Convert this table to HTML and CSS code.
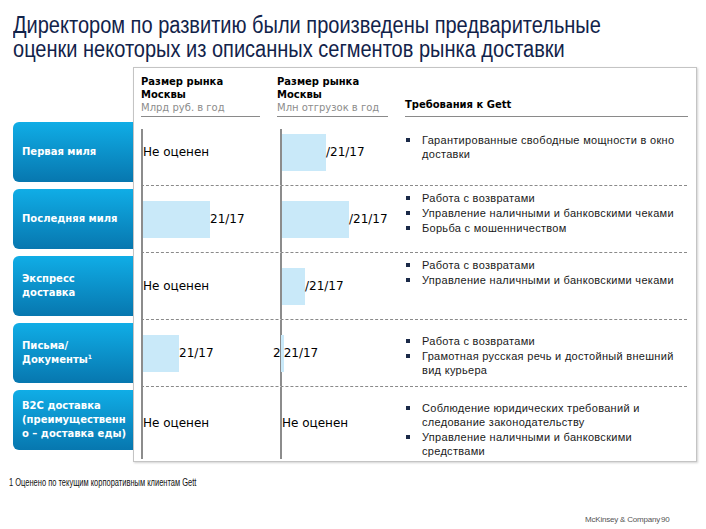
FILE: index.html
```html
<!DOCTYPE html>
<html lang="ru">
<head>
<meta charset="utf-8">
<title>Оценки сегментов рынка доставки</title>
<link rel="stylesheet" href="styles.css">
</head>
<body>
<div class="slide">
  <h1 class="title"><span class="narrow">Директором по развитию были произведены предварительные<br>оценки некоторых из описанных сегментов рынка доставки</span></h1>
  <div class="main">
    <div class="labels">
      <div class="label"><span>Первая миля</span></div>
      <div class="label"><span>Последняя миля</span></div>
      <div class="label"><span>Экспресс<br>доставка</span></div>
      <div class="label"><span>Письма/<br>Документы<sup>1</sup></span></div>
      <div class="label"><span>B2C доставка<br>(преимущественн<br>о – доставка еды)</span></div>
    </div>
    <div class="board">
      <div class="head">
        <div class="hcell"><b>Размер рынка<br>Москвы</b><span class="unit">Млрд руб. в год</span></div>
        <div class="hcell"><b>Размер рынка<br>Москвы</b><span class="unit">Млн отгрузок в год</span></div>
        <div class="hcell hcell-req"><b>Требования к Gett</b></div>
      </div>
      <div class="rows">
        <div class="row row-first">
          <div class="cell">Не оценен</div>
          <div class="cell"><span class="bar" style="width:44px"></span>/21/17</div>
          <ul class="reqs">
            <li>Гарантированные свободные мощности в окно<br>доставки</li>
          </ul>
        </div>
        <div class="row">
          <div class="cell"><span class="bar" style="width:67px"></span>21/17</div>
          <div class="cell"><span class="bar" style="width:67px"></span>/21/17</div>
          <ul class="reqs reqs-tight">
            <li>Работа с возвратами</li>
            <li>Управление наличными и банковскими чеками</li>
            <li>Борьба с мошенничеством</li>
          </ul>
        </div>
        <div class="row">
          <div class="cell">Не оценен</div>
          <div class="cell"><span class="bar" style="width:23px"></span>/21/17</div>
          <ul class="reqs reqs-tight">
            <li>Работа с возвратами</li>
            <li>Управление наличными и банковскими чеками</li>
          </ul>
        </div>
        <div class="row">
          <div class="cell"><span class="bar" style="width:36px"></span>21/17</div>
          <div class="cell"><span class="lead">2</span><span class="bar" style="width:3px"></span>21/17</div>
          <ul class="reqs">
            <li>Работа с возвратами</li>
            <li>Грамотная русская речь и достойный внешний<br>вид курьера</li>
          </ul>
        </div>
        <div class="row row-last">
          <div class="cell">Не оценен</div>
          <div class="cell">Не оценен</div>
          <ul class="reqs">
            <li>Соблюдение юридических требований и<br>следование законодательству</li>
            <li>Управление наличными и банковскими<br>средствами</li>
          </ul>
        </div>
      </div>
    </div>
  </div>
  <p class="foot"><span class="narrow">1 Оценено по текущим корпоративным клиентам Gett</span></p>
  <p class="brand">McKinsey &amp; Company<span class="page-no">90</span></p>
</div>
</body>
</html>
```

FILE: styles.css
```css
html, body {
  margin: 0;
  padding: 0;
  background: #ffffff;
}

.slide {
  width: 706px;
  height: 529px;
  overflow: hidden;
  font-family: "DejaVu Sans", "Liberation Sans", sans-serif;
  color: #111;
}

.narrow {
  display: inline-block;
  transform-origin: left top;
  white-space: nowrap;
}

.title {
  margin: 0;
  padding: 13px 0 0 13px;
  height: 49px;
  font-family: "Liberation Sans", Arial, sans-serif;
  font-weight: normal;
  font-size: 23px;
  line-height: 24px;
  color: #12234a;
}

.title .narrow {
  transform: scaleX(0.87);
}

.main {
  display: flex;
  margin-top: 5px;
}

.labels {
  margin-left: 13px;
  width: 120px;
  padding-top: 55px;
  display: flex;
  flex-direction: column;
  gap: 7px;
}

.label {
  height: 60px;
  box-sizing: border-box;
  padding-left: 9px;
  display: flex;
  align-items: center;
  border-radius: 6px 0 0 6px;
  background: linear-gradient(#10ade6, #0777af);
  color: #ffffff;
  font-weight: bold;
  font-size: 10px;
  line-height: 14px;
}

.label sup {
  font-size: 6px;
  line-height: 0;
  vertical-align: 4px;
}

.board {
  width: 564px;
  height: 395px;
  box-sizing: border-box;
  border: 1px solid #c4c4c4;
  box-shadow: 1px 1px 2px rgba(0, 0, 0, 0.18);
  padding: 7px 9px 0 7px;
  background: #fff;
}

.head {
  display: grid;
  grid-template-columns: 119px 111px 283px;
  column-gap: 17px;
  align-items: end;
}

.hcell {
  font-size: 10px;
  line-height: 13px;
  padding-bottom: 2px;
  border-bottom: 1px solid #8a8a8a;
  color: #000;
}

.hcell b {
  display: block;
}

.hcell-req {
  padding-bottom: 5px;
}

.unit {
  display: block;
  color: #8c8c8c;
}

.rows {
  margin-top: 2px;
}

.row {
  display: grid;
  grid-template-columns: 139px 117px 291px;
  height: 67px;
  box-sizing: border-box;
  border-bottom: 1px dashed #8a8a8a;
}

.row-last {
  border-bottom: none;
  height: 66px;
}

.cell {
  display: flex;
  align-items: center;
  border-left: 2px solid #8c8c8c;
  font-size: 12px;
  color: #000;
  white-space: nowrap;
}

.row-first .cell {
  margin-top: 10px;
  padding-bottom: 10px;
}

.bar {
  display: block;
  height: 37px;
  background: #c9e9f9;
  flex-shrink: 0;
}

.lead {
  margin-left: -9px;
}

.reqs {
  margin: 0;
  padding: 14px 0 0 9px;
  list-style: none;
  font-family: "Liberation Sans", Arial, sans-serif;
  font-size: 11px;
  letter-spacing: 0.3px;
  line-height: 14px;
  color: #1a1a1a;
}

.reqs-tight {
  padding-top: 5px;
}

.reqs li {
  display: flex;
  margin-bottom: 1px;
}

.reqs li::before {
  content: "";
  flex-shrink: 0;
  width: 4px;
  height: 4px;
  margin: 5px 12px 0 0;
  background: #1b2a48;
}

.foot {
  margin: 15px 0 0 9px;
  font-family: "Liberation Sans", Arial, sans-serif;
  font-size: 10px;
  line-height: 12px;
  color: #111;
}

.foot .narrow {
  transform: scaleX(0.75);
}

.brand {
  margin: 25px 0 0 585px;
  font-family: "Liberation Sans", Arial, sans-serif;
  font-size: 8px;
  letter-spacing: -0.2px;
  line-height: 12px;
  color: #555;
  white-space: nowrap;
}

.page-no {
  margin-left: 1px;
}
```
